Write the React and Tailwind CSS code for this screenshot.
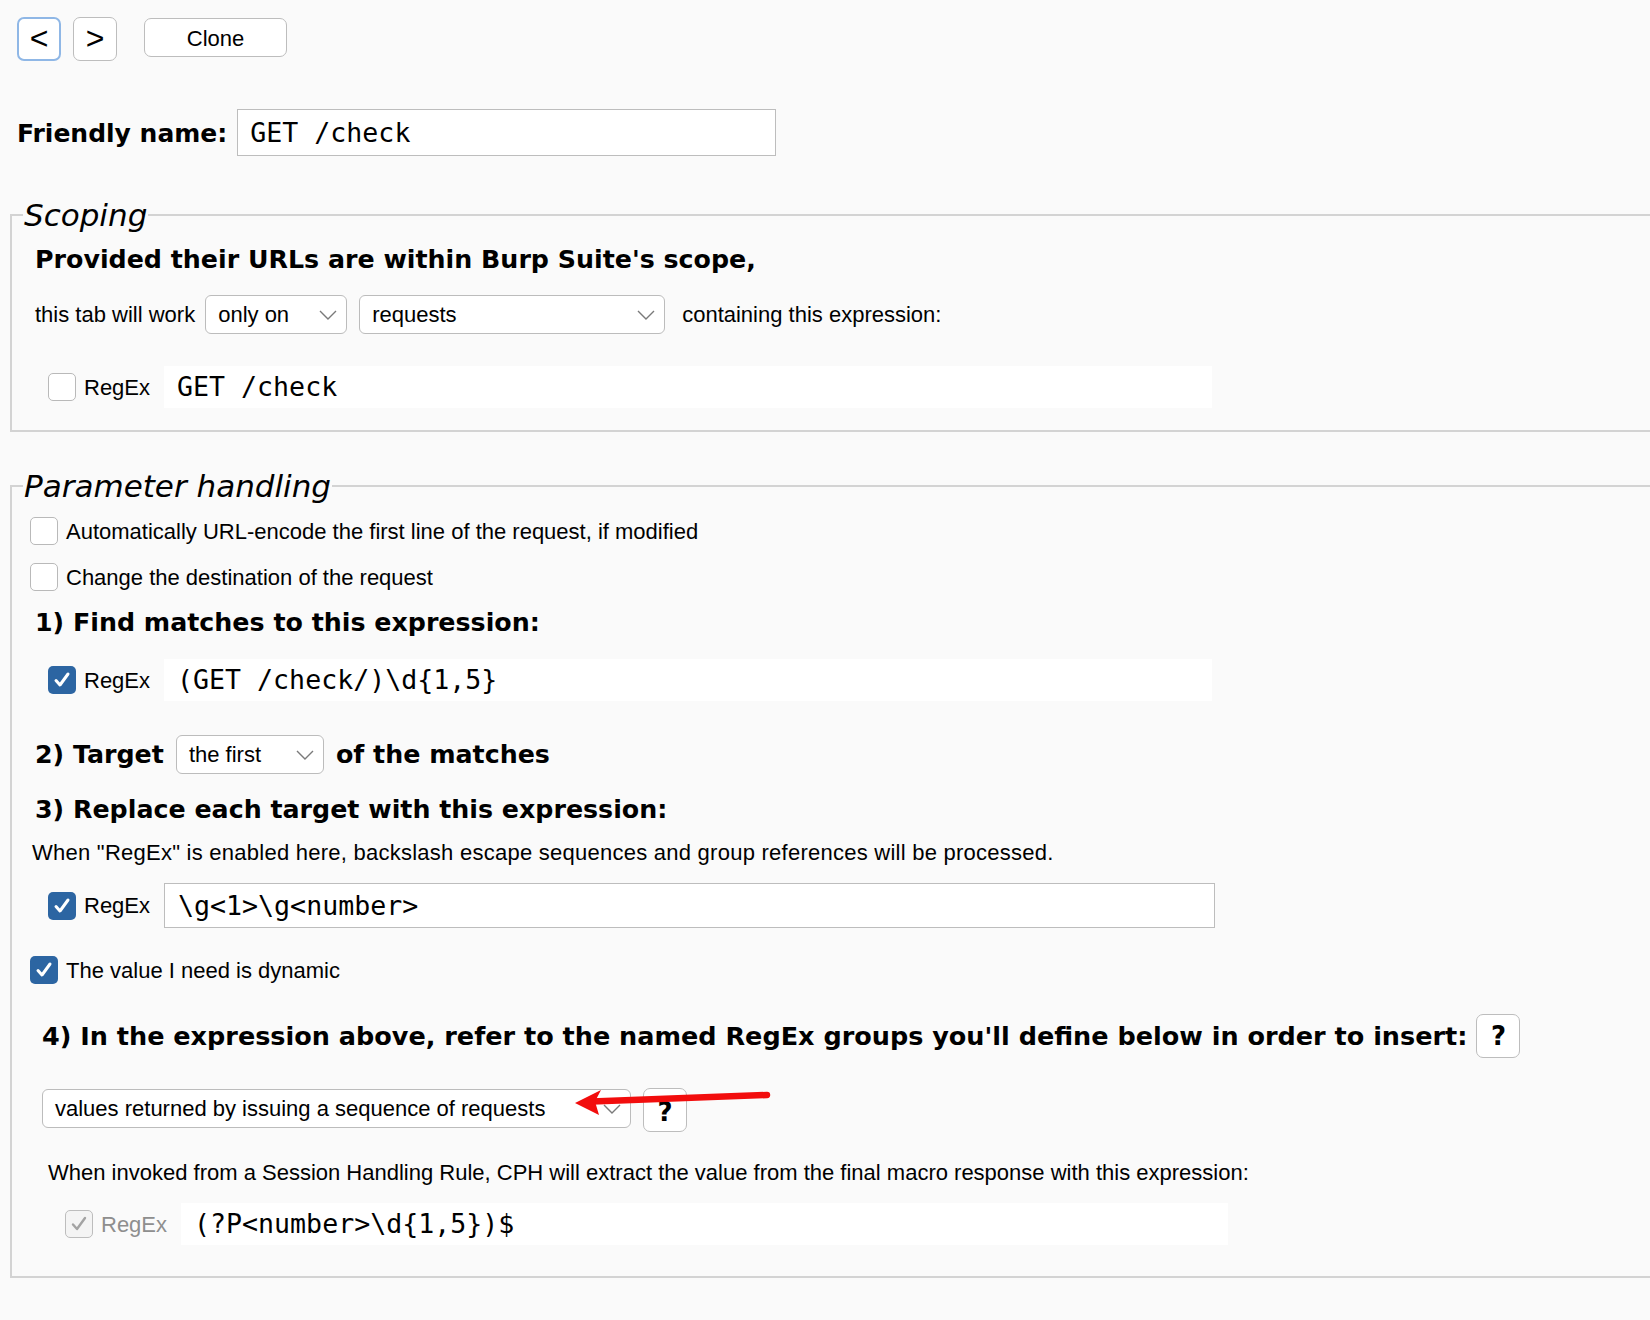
import React from 'react';

const sans = { fontFamily: '"Liberation Sans", Arial, sans-serif' };
const bold = { fontFamily: '"DejaVu Sans", Verdana, sans-serif' };
const mono = { fontFamily: '"DejaVu Sans Mono", "Liberation Mono", monospace' };

const Checkbox = ({ checked = false, disabled = false }) => {
  if (disabled) {
    return (
      <span className="flex h-[28px] w-[28px] shrink-0 items-center justify-center rounded-[5px] border-[1.5px] border-[#bdbdbd] bg-[#f4f4f4]">
        <svg width="20" height="20" viewBox="0 0 20 20">
          <path d="M4 10.5l4 4.5L16 4" fill="none" stroke="#a3a3a3" strokeWidth="2.4" strokeLinecap="round" strokeLinejoin="round" />
        </svg>
      </span>
    );
  }
  if (checked) {
    return (
      <span className="flex h-[28px] w-[28px] shrink-0 items-center justify-center rounded-[5px] bg-[#2c65a2]">
        <svg width="20" height="20" viewBox="0 0 20 20">
          <path d="M4 10.5l4 4.5L16 4" fill="none" stroke="#ffffff" strokeWidth="3" strokeLinecap="round" strokeLinejoin="round" />
        </svg>
      </span>
    );
  }
  return <span className="block h-[28px] w-[28px] shrink-0 rounded-[5px] border-[1.5px] border-[#b9b9b9] bg-white" />;
};

const Chevron = () => (
  <svg width="18" height="10" viewBox="0 0 18 10" className="shrink-0">
    <path d="M1 1l8 8 8-8" fill="none" stroke="#7a7a7a" strokeWidth="1.4" />
  </svg>
);

const Select = ({ value, width }) => (
  <div
    className={`flex h-[39px] ${width} shrink-0 items-center justify-between rounded-[6px] border-[1.5px] border-[#bcbcbc] bg-white pl-[12px] pr-[9px] text-[22px] text-black`}
    style={sans}
  >
    <span>{value}</span>
    <Chevron />
  </div>
);

const RegexRow = ({ checked, disabled, value, bordered, ml, inputW }) => (
  <div className={`flex items-center ${ml}`}>
    <Checkbox checked={checked} disabled={disabled} />
    <span
      className={`ml-[8px] text-[22px] ${disabled ? 'text-[#8e8e8e]' : 'text-black'}`}
      style={sans}
    >
      RegEx
    </span>
    <div
      className={`ml-[14px] flex items-center bg-white pl-[13px] text-[26.6px] text-black ${inputW} ${
        bordered ? 'h-[45px] border-[1.5px] border-[#bdbdbd]' : 'h-[42px]'
      }`}
      style={mono}
    >
      {value}
    </div>
  </div>
);

const Legend = ({ children }) => (
  <legend
    className="ml-[11px] px-[1px] text-[31px] italic leading-[36px] text-black"
    style={bold}
  >
    {children}
  </legend>
);

const Heading = ({ children, className = '' }) => (
  <div className={`text-[25.3px] font-bold leading-[36px] text-black ${className}`} style={bold}>
    {children}
  </div>
);

const RedArrow = () => (
  <svg
    width="205"
    height="34"
    viewBox="0 0 205 34"
    className="pointer-events-none absolute left-[528px] top-[-2px]"
  >
    <line x1="22" y1="15.5" x2="197" y2="9" stroke="#f20d0d" strokeWidth="6.5" strokeLinecap="round" />
    <polygon points="5,17 31,4 25,15.5 29,29" fill="#f20d0d" />
  </svg>
);

const App = () => {
  return (
    <div className="h-[1320px] w-[1650px] overflow-hidden bg-[#fafafa] pt-[17px] text-black" style={sans}>
      {/* Navigation */}
      <div className="flex items-start pl-[17px]">
        <button className="flex h-[44px] w-[44px] items-center justify-center rounded-[7px] border-2 border-[#8fb7e6] bg-white pb-[2px] text-[32px] leading-none">
          &lt;
        </button>
        <button className="ml-[12px] flex h-[44px] w-[44px] items-center justify-center rounded-[7px] border-[1.5px] border-[#bdbdbd] bg-white pb-[2px] text-[32px] leading-none">
          &gt;
        </button>
        <button className="ml-[27px] mt-[1px] flex h-[39px] w-[143px] items-center justify-center rounded-[7px] border-[1.5px] border-[#bdbdbd] bg-white pt-[2px] text-[22px]">
          Clone
        </button>
      </div>

      {/* Friendly name */}
      <div className="mt-[48px] flex items-center pl-[17px]">
        <span className="pt-[3px] text-[25px] font-bold" style={bold}>
          Friendly name:
        </span>
        <div
          className="ml-[10px] flex h-[47px] w-[539px] items-center border-[1.5px] border-[#bdbdbd] bg-white pl-[12px] text-[26.6px]"
          style={mono}
        >
          GET /check
        </div>
      </div>

      {/* Scoping */}
      <fieldset className="ml-[10px] mt-[41px] border-2 border-r-0 border-[#d3d3d3] pb-[22px]">
        <Legend>Scoping</Legend>
        <Heading className="ml-[23px] mt-[9px]">Provided their URLs are within Burp Suite's scope,</Heading>
        <div className="ml-[23px] mt-[17px] flex h-[39px] items-center text-[22px]">
          <span>this tab will work</span>
          <div className="ml-[10px] flex gap-[12px]">
            <Select value="only on" width="w-[142px]" />
            <Select value="requests" width="w-[306px]" />
          </div>
          <span className="ml-[17px]">containing this expression:</span>
        </div>
        <div className="mt-[32px]">
          <RegexRow value="GET /check" ml="ml-[36px]" inputW="w-[1048px]" />
        </div>
      </fieldset>

      {/* Parameter handling */}
      <fieldset className="ml-[10px] mt-[36px] border-2 border-r-0 border-[#d3d3d3] pb-[31px]">
        <Legend>Parameter handling</Legend>
        <div className="ml-[18px] mt-[13px] flex h-[28px] items-center text-[22px]">
          <Checkbox />
          <span className="ml-[8px]">Automatically URL-encode the first line of the request, if modified</span>
        </div>
        <div className="ml-[18px] mt-[18px] flex h-[28px] items-center text-[22px]">
          <Checkbox />
          <span className="ml-[8px]">Change the destination of the request</span>
        </div>
        <Heading className="ml-[23px] mt-[14px]">1) Find matches to this expression:</Heading>
        <div className="mt-[18px]">
          <RegexRow checked value={'(GET /check/)\\d{1,5}'} ml="ml-[36px]" inputW="w-[1048px]" />
        </div>
        <div className="ml-[23px] mt-[34px] flex h-[39px] items-center">
          <Heading>2) Target</Heading>
          <div className="ml-[12px]">
            <Select value="the first" width="w-[148px]" />
          </div>
          <Heading className="ml-[12px]">of the matches</Heading>
        </div>
        <Heading className="ml-[23px] mt-[18px]">3) Replace each target with this expression:</Heading>
        <div className="ml-[20px] mt-[13px] h-[24px] text-[22px] leading-[24px] tracking-[0.25px]">
          When "RegEx" is enabled here, backslash escape sequences and group references will be processed.
        </div>
        <div className="mt-[18px]">
          <RegexRow checked bordered value={'\\g<1>\\g<number>'} ml="ml-[36px]" inputW="w-[1051px]" />
        </div>
        <div className="ml-[18px] mt-[28px] flex h-[28px] items-center text-[22px]">
          <Checkbox checked />
          <span className="ml-[8px]">The value I need is dynamic</span>
        </div>
        <div className="ml-[30px] mt-[30px] flex h-[44px] items-center">
          <div className="text-[25.5px] font-bold leading-[36px] text-black" style={bold}>
            4) In the expression above, refer to the named RegEx groups you'll define below in order to insert:
          </div>
          <button
            className="ml-[9px] flex h-[44px] w-[44px] items-center justify-center rounded-[7px] border-[1.5px] border-[#bdbdbd] bg-white text-[26px] font-bold"
            style={bold}
          >
            ?
          </button>
        </div>
        <div className="relative ml-[30px] mt-[30px] flex h-[44px] items-start">
          <div className="mt-[1px]">
            <Select value="values returned by issuing a sequence of requests" width="w-[589px]" />
          </div>
          <button
            className="ml-[12px] flex h-[44px] w-[44px] items-center justify-center rounded-[7px] border-[1.5px] border-[#bdbdbd] bg-white pt-[4px] text-[26px] font-bold"
            style={bold}
          >
            ?
          </button>
          <RedArrow />
        </div>
        <div className="ml-[36px] mt-[29px] h-[24px] text-[22px] leading-[24px]">
          When invoked from a Session Handling Rule, CPH will extract the value from the final macro response with this expression:
        </div>
        <div className="mt-[18px]">
          <RegexRow disabled value={'(?P<number>\\d{1,5})$'} ml="ml-[53px]" inputW="w-[1047px]" />
        </div>
      </fieldset>
    </div>
  );
};

export default App;
